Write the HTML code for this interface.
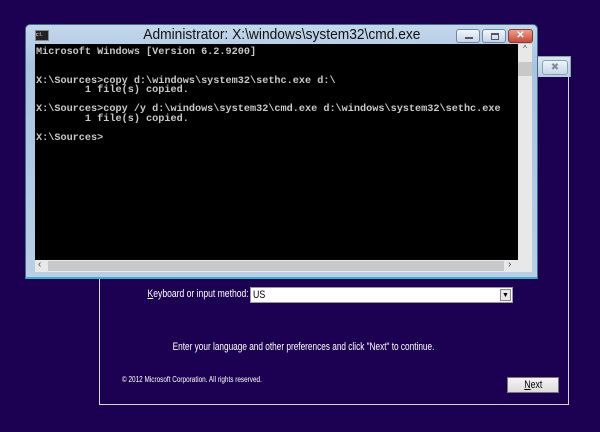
<!DOCTYPE html>
<html><head><style>
body{margin:0;width:600px;height:432px;background:#1c0052;position:relative;overflow:hidden;font-family:"Liberation Sans",sans-serif}
.abs{position:absolute}
.sx{display:inline-block;transform:scaleX(0.8);white-space:nowrap}
</style></head><body>
<div class="abs" style="left:99px;top:56px;width:468px;height:347px;border:1px solid #d8d8e0;"></div>
<div class="abs" style="left:537px;top:56px;width:32px;height:20px;background:linear-gradient(#dbe6f2,#b9cde3);border:1px solid #8aa;border-bottom:none"></div>
<div class="abs" style="left:542px;top:60px;width:24px;height:13px;border:1px solid #8a9fb8;border-radius:3px;background:linear-gradient(#eef3f9,#c8d6e6);font-size:10px;color:#889;text-align:center;line-height:13px">✖</div>
<div class="abs" style="right:351px;top:288px;font-size:11px;color:#fff"><span class="sx" style="transform-origin:right;transform:scaleX(0.78)"><u>K</u>eyboard or input method:</span></div>
<div class="abs" style="left:250px;top:287px;width:263px;height:16px;background:#fff;border:1px solid #999;font-size:11px;line-height:15px;color:#000;padding-left:2px;box-sizing:border-box"><span class="sx" style="transform-origin:left">US</span></div>
<div class="abs" style="left:500px;top:289px;width:11px;height:12px;background:#e8e8e8;border:1px solid #888;box-sizing:border-box;font-size:7px;text-align:center;line-height:11px">▼</div>
<div class="abs" style="left:0;width:607px;top:341px;text-align:center;font-size:11px;color:#fff"><span class="sx" style="transform:scaleX(0.75)">Enter your language and other preferences and click "Next" to continue.</span></div>
<div class="abs" style="left:122px;top:375px;font-size:8px;color:#fff"><span class="sx" style="transform-origin:left">© 2012 Microsoft Corporation. All rights reserved.</span></div>
<div class="abs" style="left:507px;top:377px;width:52px;height:16px;background:linear-gradient(#f4f4f4,#dcdcdc);border:1px solid #777;box-sizing:border-box;font-size:11px;text-align:center;line-height:14px;color:#000"><span class="sx"><u>N</u>ext</span></div>
<div class="abs" style="left:25px;top:24px;width:513px;height:255px;background:linear-gradient(#c4d8ec,#aac4e0 40px,#b8cfe6);border:1px solid #4a6a8a;border-bottom:2px solid #39b0c8;box-sizing:border-box;border-radius:5px 5px 0 0"></div>
<div class="abs" style="left:35px;top:30px;width:12px;height:9px;background:#222;border:1px solid #888;font-size:5px;color:#fff;line-height:9px">c:\.</div>
<div class="abs" style="left:0;width:563px;top:27px;text-align:center;font-size:14.5px;color:#111"><span class="sx" style="transform:scaleX(0.95)">Administrator: X:\windows\system32\cmd.exe</span></div>
<div class="abs" style="left:456px;top:29px;width:24px;height:14px;border:1px solid #7088a8;border-radius:3px;background:linear-gradient(#f2f6fb,#c6d5e6);box-sizing:border-box"><div style="position:absolute;left:8px;top:7px;width:8px;height:2px;background:#556"></div></div>
<div class="abs" style="left:482px;top:29px;width:24px;height:14px;border:1px solid #7088a8;border-radius:3px;background:linear-gradient(#f2f6fb,#c6d5e6);box-sizing:border-box"><div style="position:absolute;left:8px;top:3px;width:6px;height:4px;border:1px solid #556;border-top-width:2px"></div></div>
<div class="abs" style="left:508px;top:29px;width:25px;height:14px;border:1px solid #8a3a30;border-radius:3px;background:linear-gradient(#eaa090,#c84a38);box-sizing:border-box;color:#fff;font-size:10px;text-align:center;line-height:12px;font-weight:bold">✕</div>
<div class="abs" style="left:35px;top:44px;width:483px;height:216px;background:#000"></div>
<pre class="abs" style="margin:0;left:36px;top:48px;font-family:'Liberation Mono',monospace;font-size:10.2px;line-height:9.5px;color:#c8c8c8;font-weight:bold">Microsoft Windows [Version 6.2.9200]


X:\Sources>copy d:\windows\system32\sethc.exe d:\
        1 file(s) copied.

X:\Sources>copy /y d:\windows\system32\cmd.exe d:\windows\system32\sethc.exe
        1 file(s) copied.

X:\Sources></pre>
<div class="abs" style="left:518px;top:44px;width:14px;height:216px;background:#e8e8e8"></div>
<div class="abs" style="left:518px;top:62px;width:14px;height:14px;background:#c8c8c8"></div>
<div class="abs" style="left:518px;top:44px;width:14px;font-size:8px;text-align:center;color:#444">^</div>
<div class="abs" style="left:35px;top:260px;width:483px;height:12px;background:#e8e8e8"></div>
<div class="abs" style="left:48px;top:261px;width:456px;height:10px;background:#c8c8c8"></div>
<div class="abs" style="left:38px;top:259px;font-size:10px;color:#444">‹</div>
<div class="abs" style="left:508px;top:259px;font-size:10px;color:#444">›</div>
<div class="abs" style="left:518px;top:260px;width:14px;height:12px;background:#e8e8e8"></div>
</body></html>
